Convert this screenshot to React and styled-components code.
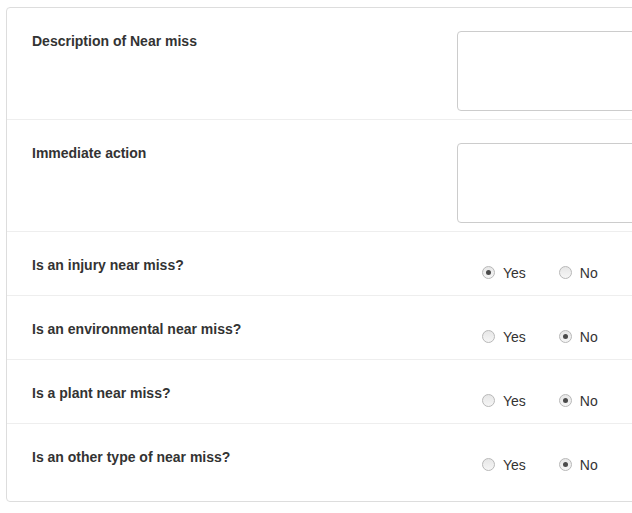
import React from "react";
import styled, { createGlobalStyle } from "styled-components";

const GlobalStyle = createGlobalStyle`
  html, body {
    margin: 0;
    padding: 0;
    background: #fff;
    overflow: hidden;
  }
  body {
    font-family: "Liberation Sans", Arial, sans-serif;
    color: #333;
  }
`;

const Card = styled.div`
  margin: 7px 0 0 6px;
  width: 720px;
  border: 1px solid #ddd;
  border-radius: 4px;
  padding-bottom: 14px;
  background: #fff;
`;

const Row = styled.div`
  display: grid;
  grid-template-columns: 425px 1fr;
  padding: 24px 0 8px 25px;
  border-top: ${(p) => (p.first ? "none" : "1px solid #eee")};
`;

const Label = styled.div`
  font-size: 14px;
  font-weight: bold;
  line-height: 18px;
  margin-bottom: 13px;
`;

const TextArea = styled.textarea`
  display: block;
  box-sizing: border-box;
  margin-top: -1px;
  width: 260px;
  height: 80px;
  border: 1px solid #ccc;
  border-radius: 4px;
  resize: none;
  font-family: inherit;
  outline: none;
`;

const RadioGroup = styled.div`
  display: flex;
  gap: 33px;
  margin-top: 2px;
  padding-left: 25px;
`;

const Option = styled.label`
  display: flex;
  align-items: center;
  gap: 8px;
  font-size: 14px;
  line-height: 20px;
  color: #333;
`;

const Radio = styled.span`
  box-sizing: border-box;
  width: 13px;
  height: 13px;
  border-radius: 50%;
  border: 1px solid #b8b8b8;
  background: linear-gradient(#e6e6e6, #f6f6f6);
  display: flex;
  align-items: center;
  justify-content: center;

  &::after {
    content: "";
    width: 5px;
    height: 5px;
    border-radius: 50%;
    background: #4a4a4a;
    display: ${(p) => (p.checked ? "block" : "none")};
  }
`;

const questions = [
  { label: "Is an injury near miss?", value: "yes" },
  { label: "Is an environmental near miss?", value: "no" },
  { label: "Is a plant near miss?", value: "no" },
  { label: "Is an other type of near miss?", value: "no" },
];

const YesNo = ({ value }) => (
  <RadioGroup>
    <Option>
      <Radio checked={value === "yes"} />
      Yes
    </Option>
    <Option>
      <Radio checked={value === "no"} />
      No
    </Option>
  </RadioGroup>
);

const App = () => (
  <>
    <GlobalStyle />
    <Card>
      <Row first>
        <Label>Description of Near miss</Label>
        <div>
          <TextArea />
        </div>
      </Row>
      <Row>
        <Label>Immediate action</Label>
        <div>
          <TextArea />
        </div>
      </Row>
      {questions.map((q) => (
        <Row key={q.label}>
          <Label>{q.label}</Label>
          <YesNo value={q.value} />
        </Row>
      ))}
    </Card>
  </>
);

export default App;
